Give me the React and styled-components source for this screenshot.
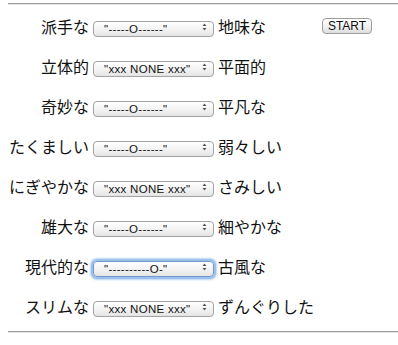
import React from "react";
import styled, { createGlobalStyle, css } from "styled-components";

const Global = createGlobalStyle`
  html, body { margin: 0; padding: 0; background: #fff; }
  body { font-family: "Liberation Serif", "Noto Sans CJK JP", serif; color: #111; }
`;

const Page = styled.div`
  width: 398px;
  height: 345px;
  padding: 3px 0 0 8px;
  box-sizing: border-box;
`;

const Rule = styled.hr`
  margin: 0;
  height: 0;
  border: none;
  border-top: 1px solid #9c9c9c;
  border-bottom: 1px solid #e6e6e6;
`;

const Table = styled.div`
  display: grid;
  grid-template-columns: 81px 121px 100px 50px;
  grid-auto-rows: 40px;
  column-gap: 4px;
  align-items: center;
  margin: 2px 0 4px;
`;

const Label = styled.div`
  font-family: "Noto Sans CJK JP", sans-serif;
  font-size: 16px;
  line-height: 20px;
  white-space: nowrap;
  text-align: ${(p) => (p.$right ? "right" : "left")};
  margin-top: -3px;
`;

const SelectWrap = styled.div`
  position: relative;
  width: 121px;
  height: 16px;
`;

const Select = styled.select`
  appearance: none;
  -webkit-appearance: none;
  width: 100%;
  height: 16px;
  box-sizing: border-box;
  margin: 0;
  padding: 0 0 0 10px;
  font-family: "Liberation Sans", "DejaVu Sans", sans-serif;
  font-size: 11.5px;
  letter-spacing: 0.3px;
  line-height: 14px;
  color: #111;
  border: 1px solid #a3a3a3;
  border-radius: 4px;
  background: linear-gradient(#ffffff, #f1f1f1 60%, #e4e4e4);
  outline: none;
  ${(p) =>
    p.$focused &&
    css`
      border-color: #7397c9;
      box-shadow: 0 0 0 2px #9cc0ec, 0 0 2px 3px #bcd6f4;
    `}
`;

const Arrow = styled.svg`
  position: absolute;
  right: 7px;
  top: 4px;
  pointer-events: none;
`;

const Button = styled.button`
  width: 50px;
  height: 16px;
  padding: 0;
  box-sizing: border-box;
  font-family: "Liberation Sans", "DejaVu Sans", sans-serif;
  font-size: 12px;
  line-height: 14px;
  color: #111;
  border: 1px solid #9d9d9d;
  border-radius: 4px;
  background: linear-gradient(#ffffff, #f0f0f0 55%, #dedede);
  margin-top: -2px;
`;

const rows = [
  ["派手な", '"-----O------"', "地味な"],
  ["立体的", '"xxx NONE xxx"', "平面的"],
  ["奇妙な", '"-----O------"', "平凡な"],
  ["たくましい", '"-----O------"', "弱々しい"],
  ["にぎやかな", '"xxx NONE xxx"', "さみしい"],
  ["雄大な", '"-----O------"', "細やかな"],
  ["現代的な", '"----------O-"', "古風な", true],
  ["スリムな", '"xxx NONE xxx"', "ずんぐりした"],
];

function Dropdown({ value, focused }) {
  return (
    <SelectWrap>
      <Select $focused={focused} defaultValue={value}>
        <option value={value}>{value}</option>
      </Select>
      <Arrow width="5" height="8" viewBox="0 0 5 8">
        <path d="M2.5 0.5 L4.5 3 L0.5 3 Z" fill="#555" />
        <path d="M0.5 5 L4.5 5 L2.5 7.5 Z" fill="#555" />
      </Arrow>
    </SelectWrap>
  );
}

export default function App() {
  return (
    <Page>
      <Global />
      <Rule />
      <Table>
        {rows.map(([l, v, r, f], i) => (
          <React.Fragment key={i}>
            <Label $right>{l}</Label>
            <Dropdown value={v} focused={f} />
            <Label>{r}</Label>
            {i === 0 ? <Button>START</Button> : <span />}
          </React.Fragment>
        ))}
      </Table>
      <Rule />
    </Page>
  );
}
